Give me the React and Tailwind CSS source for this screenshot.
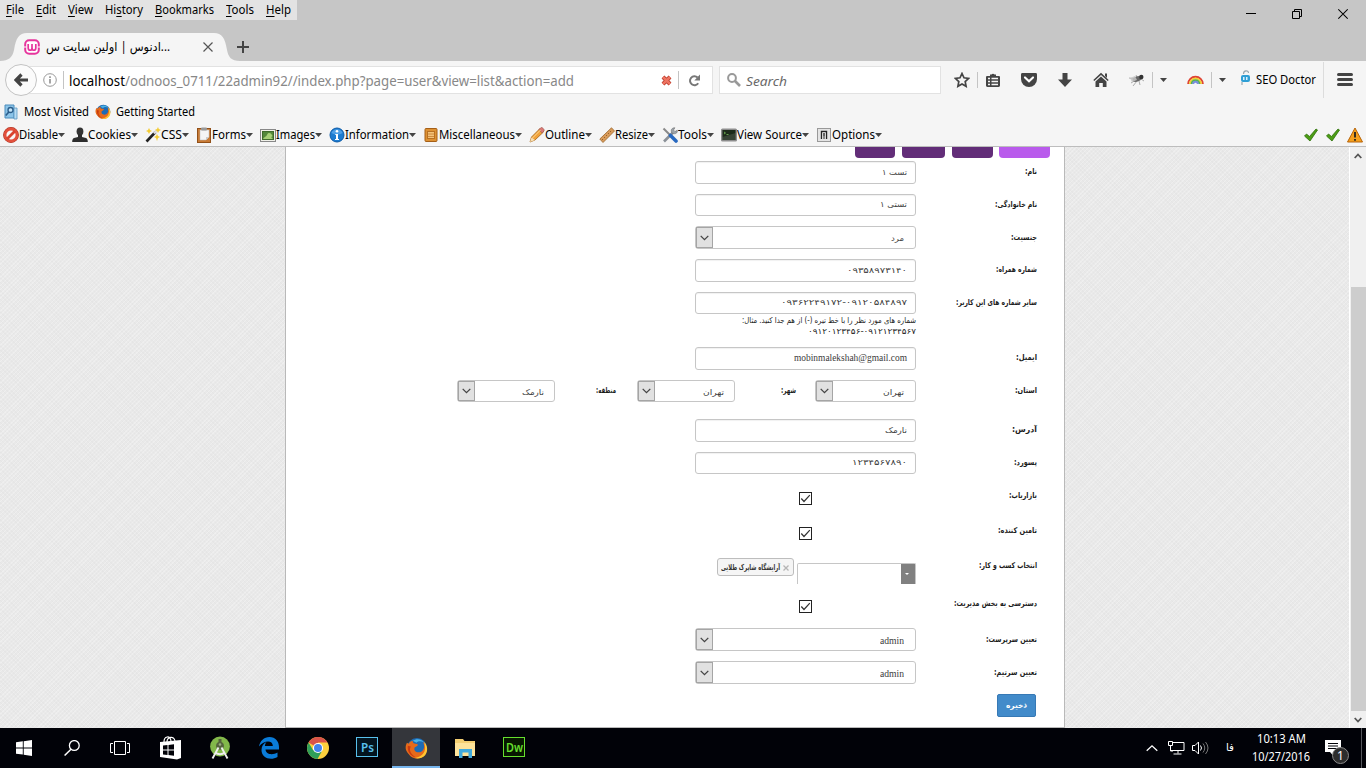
import React, { useLayoutEffect, useRef, useState } from "react";

const UI = "font-['Noto_Sans','DejaVu_Sans',sans-serif]";
const FA = "font-['DejaVu_Sans',sans-serif]";

/* One line of text condensed or widened to a set width. */
function Fit({ w, dir = "ltr", className = "", children }) {
  const ref = useRef(null);
  const [k, setK] = useState(1);
  useLayoutEffect(() => {
    if (ref.current.offsetWidth) setK(w / ref.current.getBoundingClientRect().width);
  }, [w]);
  return (
    <span dir="ltr" className={"flex shrink-0 " + className} style={{ width: w }}>
      <span ref={ref} dir={dir} className="block shrink-0 origin-left whitespace-nowrap" style={{ transform: `scaleX(${k})` }}>
        {children}
      </span>
    </span>
  );
}

const Svg = ({ w = 16, h = 16, box, className = "", children }) => (
  <svg width={w} height={h} viewBox={box || `0 0 ${w} ${h}`} fill="none" className={"block shrink-0 " + className}>{children}</svg>
);

const Firefox = ({ s = 16 }) => (
  <Svg w={s} h={s} box="0 0 24 24">
    <circle cx="12.5" cy="11.5" r="10.5" fill="#1d6bb5" />
    <path d="M8 4C12 1 18 2 20 6c-3-2-6-2-8 0z" fill="#49b4e8" />
    <path d="M2 6l2 1c1-2 3-3 4-3 0 2 1 3 3 3 2 0 3 1 2 2l-3 2c-1 3 1 5 4 5 4 0 6-3 6-7l-1-4c4 4 5 9 2 13-4 6-13 6-17 0C0 14 0 10 2 6z" fill="#e66a1a" />
    <path d="M20 5c4 5 4 10 1 14-3 3-7 4-11 3 7-1 11-5 11-11z" fill="#ffc531" />
    <path d="M3 9c-1 6 3 11 8 12-5-3-7-7-5-11z" fill="#c83a10" />
  </Svg>
);

const Caret = ({ w = 7 }) => <Svg w={w} h={4} box="0 0 7 4"><path d="M0 0h7L3.5 4z" fill="#444" /></Svg>;
const Chevron = () => <Svg w={9} h={6}><path d="M.7.9 4.5 4.7 8.3.9" stroke="#444" strokeWidth="1.3" /></Svg>;

const devIcons = {
  Disable: <Svg><circle cx="8" cy="8" r="6" stroke="#a8301f" strokeWidth="3.8" /><circle cx="8" cy="8" r="6" stroke="#e2503c" strokeWidth="2.8" fill="#f8f8f8" /><path d="M4 12 12 4" stroke="#d9442f" strokeWidth="2.8" /></Svg>,
  Cookies: <Svg><ellipse cx="8" cy="4.600" rx="3.400" ry="4" fill="#333" /><path d="M6 7h4v3l4 1c1.300.5 1.800 2 1.800 4H.2c0-2 .5-3.500 1.800-4l4-1z" fill="#2d2d2d" /></Svg>,
  CSS: <Svg><path d="M1.500 14.500 10.500 5" stroke="#222" strokeWidth="2.600" /><path d="M9 6.500 12 3" stroke="#ddd" strokeWidth="2.600" /><path d="m4 1 1 2 2 1-2 1-1 2-1-2-2-1 2-1zM12 7l1 2 2 1-2 1-1 3-1-3-2-1 2-1zM13 0l.8 2L16 3l-2 1-1 2-1-2-2-1 2-1z" fill="#f3cc35" /></Svg>,
  Forms: <Svg><rect x="1.500" y="1.500" width="13" height="14" fill="#c87b36" stroke="#925018" /><path d="M4 3h9v7l-3 3H4z" fill="#f5f5f5" stroke="#bbb" strokeWidth=".5" /><path d="M10 13v-3h3" fill="#ccc" /><rect x="5" y=".5" width="6" height="3" rx="1" fill="#999" /></Svg>,
  Images: <Svg><rect x=".5" y="2.500" width="15" height="12" fill="#f1f1ea" stroke="#888" /><rect x="2.500" y="4.500" width="11" height="8" fill="#53883a" stroke="#3f6b2c" /><path d="M3 12c2-3 3-2 4-4 1-3 4-2 5 0 1 1 0 2-1 2l2 2z" fill="#a6cf76" /></Svg>,
  Information: <Svg><circle cx="8" cy="8" r="7" fill="#1c7bd0" stroke="#0c5ba8" /><path d="M2.500 6C4 1 12 1 13.500 6 10 8 6 8 2.500 6z" fill="#4d9fe6" /><circle cx="8" cy="4.300" r="1.300" fill="#fff" /><path d="M6.300 7h2.700v5h1v1H6v-1h1V8h-.7z" fill="#fff" /></Svg>,
  Miscellaneous: <Svg><rect x="2" y="1.500" width="12" height="13" rx="1" fill="#dd9133" stroke="#a55f17" /><rect x="4.500" y="4.500" width="7" height="7" fill="#f3c37a" stroke="#b87022" /><path d="M5 7h6M5 9.500h6" stroke="#cf8a3d" /></Svg>,
  Outline: <Svg><path d="m1 15 1.500-5L11 1.500 14.500 5 6 13z" fill="#f1a23a" stroke="#a4641a" strokeWidth=".8" /><path d="m10 2.500 2-2c1-.5 4 2 3 3.500l-2 2z" fill="#da7a75" stroke="#9b5651" strokeWidth=".6" /><path d="m1 15 1.500-4.500L6 13z" fill="#f6dfb6" /><path d="m3.500 11 8-8" stroke="#ffd891" /></Svg>,
  Resize: <Svg><path d="M.8 12 12.500.8l3 3.200L4 15.500z" fill="#d89b5b" stroke="#9a6429" strokeWidth=".8" /><path d="m3 12 1 1m1-3 1 1m1-3 1 1m1-3 1 1m1-3 1 1" stroke="#8a5520" strokeWidth=".8" /></Svg>,
  Tools: <Svg><path d="m2 14.500 9-9" stroke="#8b9198" strokeWidth="2.600" /><path d="M10 6C8 3 10 .5 13 .8L11.500 3l1.500 1.500 2.300-1.300C16 6 13 8 10 6z" fill="#9aa1a8" stroke="#666" strokeWidth=".5" /><path d="M1.500 1.500 8 8" stroke="#888" strokeWidth="2" /><path d="m8.500 8.500 5.500 5.500" stroke="#2768c0" strokeWidth="3.600" strokeLinecap="round" /></Svg>,
  "View Source": <Svg><rect x=".7" y="2.200" width="14.600" height="11.600" rx=".8" fill="#1c2b1a" stroke="#8d8d8d" strokeWidth="1.400" /><path d="m3 5 1.500 1L3 7M5.500 7.500h2" stroke="#78c15a" strokeWidth=".8" /><path d="M1.500 10 14.500 6v7h-13z" fill="#fff" opacity=".12" /></Svg>,
  Options: <Svg><rect x="1.500" y="1.500" width="13" height="13" fill="#e4e4e4" stroke="#999" /><path d="M5.500 12V4.500h5V12" stroke="#222" strokeWidth="1.400" fill="#fff" /><path d="M8 6v3" stroke="#222" strokeWidth="1.400" /><path d="M7 9h2v3H7z" fill="#888" /></Svg>,
};

const devItems = [["Disable", 39], ["Cookies", 43], ["CSS", 21], ["Forms", 34], ["Images", 39], ["Information", 64], ["Miscellaneous", 76], ["Outline", 40], ["Resize", 33], ["Tools", 29], ["View Source", 65], ["Options", 43]];

const menu = [["", "F", "ile", 18], ["", "E", "dit", 20], ["", "V", "iew", 25], ["Hi", "s", "tory", 38], ["", "B", "ookmarks", 59], ["", "T", "ools", 28], ["", "H", "elp", 25]];

const Sep = ({ className = "" }) => <span className={"h-4 w-px shrink-0 bg-[#c4c4c4] " + className} />;
const Tick = () => <Svg w={14} h={14}><path d="m.5 8 2-2 3 2.500L12 1l1.500 1L6 13z" fill="#4c9d14" stroke="#2c6e08" strokeWidth=".8" /></Svg>;

function Browser() {
  return (
    <header className={"flex h-[147px] shrink-0 flex-col border-b border-[#bdbdbd] bg-[#f5f5f5] text-black " + UI}>
      <div className="flex h-[61px] shrink-0 justify-between bg-[#c6c6c6]">
        <div className="flex flex-col">
          <nav className="flex h-5 w-[297px] items-center gap-3 bg-[#e3e3e3] pl-1.5 text-[12px] leading-5">
            {menu.map(([a, u, b, w]) => (
              <Fit key={u + b} w={w}>{a}<span className="underline underline-offset-2">{u}</span>{b}</Fit>
            ))}
          </nav>
          <div className="mt-[13px] flex h-7">
            <div className="relative flex h-7 w-[232px] items-center pl-6">
              <Svg w={240} h={28} className="absolute left-0 top-0"><path d="M0 28C9 28 12.500 24 14 17 16 5 19 0 27 0h187c8 0 11 5 13 17 1.500 7 4 11 13 11z" fill="#f5f5f5" /></Svg>
              <div className="relative flex items-center">
                <Svg><rect x="1.200" y="1.200" width="13.600" height="13.600" rx="4" fill="#fff" stroke="#e6349c" strokeWidth="2" /><path d="M4.200 5v4c0 3 3.800 3 3.800 0V5m0 4c0 3 3.800 3 3.800 0V5" stroke="#e6349c" strokeWidth="1.700" /><path d="M0 8h2.500M13.500 8H16" stroke="#fff" /></Svg>
                <Fit w={124} className="ml-1.5 text-[12px] leading-5">ادنوس | اولین سایت س...</Fit>
                <Svg w={10} h={10} className="ml-[33px]"><path d="m.5.5 9 9m0-9-9 9" stroke="#555" strokeWidth="1.200" /></Svg>
              </div>
            </div>
            <Svg w={12} h={12} className="relative ml-[5px] mt-2"><path d="M6 0v12M0 6h12" stroke="#444" strokeWidth="2" /></Svg>
          </div>
        </div>
        <div className="mt-2 flex gap-9 pr-[18px]">
          <Svg w={10} h={12}><path d="M0 5.500h10" stroke="#000" /></Svg>
          <Svg w={10} h={12}><path d="M.5 3.500h7v7h-7zM2.500 3.500v-2h7v7h-2" stroke="#000" /></Svg>
          <Svg w={10} h={12}><path d="m.3 1.300 9.400 9.400m0-9.400L.3 10.700" stroke="#000" strokeWidth="1.100" /></Svg>
        </div>
      </div>

      <div className="flex h-[38px] shrink-0 items-center pl-[5px]">
        <span className="z-10 flex h-8 w-8 shrink-0 items-center justify-center rounded-full border border-[#c3c3c3] bg-[#fbfbfb]">
          <Svg w={14} h={14}><path d="M7.500 1.500 2 7l5.500 5.500M2.500 7H14" stroke="#444" strokeWidth="3.200" /></Svg>
        </span>
        <div className="-ml-4 flex h-7 w-[692px] shrink-0 items-center border border-[#e2e2e2] bg-white">
          <Svg w={14} h={14} className="ml-[21px]"><circle cx="7" cy="7" r="6.300" stroke="#999" /><path d="M7 6v4.500M7 3.300V5" stroke="#888" strokeWidth="1.500" /></Svg>
          <Sep className="ml-1.5 h-[18px]" />
          <Fit w={505} className="ml-[5px] mt-0.5 text-[14px] leading-6 text-[#888]"><span className="text-black">localhost</span>/odnoos_0711/22admin92//index.php?page=user&amp;view=list&amp;action=add</Fit>
          <Svg w={11} h={11} className="ml-[87px]"><path d="m2 2 7 7m0-7L2 9" stroke="#b33222" strokeWidth="4" /><path d="m2 2 7 7m0-7L2 9" stroke="#ee7361" strokeWidth="2.600" /></Svg>
          <Sep className="ml-1.5 h-[18px]" />
          <Svg w={13} h={13} className="ml-[9px]"><path d="M10.200 9.300A4.500 4.500 0 1 1 9.600 3.500" stroke="#777" strokeWidth="2" /><path d="M12 .5v6H6.300z" fill="#777" /></Svg>
        </div>
        <div className="ml-1.5 flex h-7 w-[222px] shrink-0 items-center border border-[#e2e2e2] bg-white pl-[7px]">
          <Svg w={14} h={14}><circle cx="5" cy="5" r="3.900" stroke="#999" strokeWidth="2" /><path d="m8 8 5 5" stroke="#999" strokeWidth="2.600" /></Svg>
          <Fit w={41} className="ml-[5px] mt-0.5 text-[13px] italic leading-6 text-[#6a6a6a]">Search</Fit>
        </div>
        <Svg className="ml-[13px]"><path d="m8 1.500 2 4.300 4.700.6-3.500 3.200.9 4.700L8 12l-4.100 2.300.9-4.700L1.300 6.400 6 5.800z" stroke="#444" strokeWidth="1.700" /></Svg>
        <Sep className="ml-[7px]" />
        <Svg className="ml-[7px]"><path d="M5 2.500h1.500a1.800 1.800 0 0 1 3 0H11V4h2.500c1 0 1.500.5 1.500 1.300v8c0 1-.5 1.700-1.500 1.700h-11C1.500 15 1 14.300 1 13.300v-8C1 4.500 1.500 4 2.500 4H5z" fill="#444" /><path d="M3 6.500h2M6.500 6.500H13M3 9.500h2M6.500 9.500H13M3 12.500h2M6.500 12.500H13" stroke="#f5f5f5" strokeWidth="1.500" /></Svg>
        <Svg className="ml-5"><path d="M1.500 1h13c1 0 1.500.5 1.500 1.500V7a8 8 0 0 1-16 0V2.500C0 1.500.500 1 1.500 1z" fill="#444" /><path d="M4 5.500 8 9.200l4-3.700" stroke="#fff" strokeWidth="2.200" strokeLinecap="round" /></Svg>
        <Svg className="ml-5"><path d="M5.500 1h5v6.500H15L8 15 1 7.500h4.500z" fill="#444" /></Svg>
        <Svg className="ml-5"><path d="M8 .8 15.700 8l-1 1L8 3 1.300 9l-1-1z" fill="#444" /><path d="M8 4.500 13.500 9.500V15H9.800v-4H6.200v4H2.500V9.500zM12 1.500h2V6l-2-2z" fill="#444" /></Svg>
        <Svg className="ml-5"><path d="M0 6 7 7M2 11l5-3M4 14l4-5m2 0 1 4M12 7l3 2M8 5 7 3" stroke="#999" strokeWidth=".8" /><ellipse cx="8" cy="7" rx="4.500" ry="2.600" fill="#666" transform="rotate(-15 8 7)" /><circle cx="12.300" cy="5" r="2.200" fill="#333" /><path d="m1 6 5-2 2 4-5 2z" fill="#c4c4c4" opacity=".85" /></Svg>
        <Sep className="ml-[7px]" />
        <span className="ml-[7px]"><Caret /></span>
        <Svg w={17} h={12} className="ml-5"><path d="M1.200 10a7.300 7.300 0 0 1 14.600 0" stroke="#df4335" strokeWidth="2" /><path d="M3 10a5.500 5.500 0 0 1 11 0" stroke="#f2cf35" strokeWidth="2" /><path d="M4.700 10a3.800 3.800 0 0 1 7.600 0" stroke="#55b253" strokeWidth="2" /><path d="M6.200 10a2.300 2.300 0 0 1 4.600 0" stroke="#7a8dde" strokeWidth="2" /></Svg>
        <Sep className="ml-[7px]" />
        <span className="ml-[7px]"><Caret /></span>
        <Svg w={11} h={16} className="-mt-1 ml-3.5"><rect x="1" y="5" width="9" height="7" rx="2" fill="#2f9fd5" /><path d="M3 7h1.500v3H3zm3 0h1.500v3H6z" fill="#d9f1fd" /><path d="M3.500 4C3.500 0 8.500 0 8.500 3M2 12v3" stroke="#9aa7ae" strokeWidth="1.200" /></Svg>
        <Fit w={60} className="ml-[5px] text-[12px] leading-5">SEO Doctor</Fit>
        <Sep className="ml-[7px] h-9 bg-[#dcdcdc]" />
        <Svg className="ml-[13px]"><path d="M1.500 2.500h13M1.500 7.500h13M1.500 12.500h13" stroke="#444" strokeWidth="3" strokeLinecap="round" /></Svg>
      </div>

      <div className="mt-px flex h-6 shrink-0 items-center pl-[3px] text-[12px] leading-5">
        <Svg><path d="M2 1h9v13H2z" fill="#8cc4e8" stroke="#4a8cbc" /><path d="M11 4h3v11h-3z" fill="#b8dcf3" stroke="#5c98c2" strokeWidth=".8" /><circle cx="7.500" cy="6" r="2.500" fill="#c3e4f8" stroke="#2b5d8a" strokeWidth="1.300" /><path d="m5.800 8-3 3.500" stroke="#2b5d8a" strokeWidth="1.600" /></Svg>
        <Fit w={65} className="ml-[5px]">Most Visited</Fit>
        <span className="ml-1.5"><Firefox /></span>
        <Fit w={79} className="ml-[5px]">Getting Started</Fit>
      </div>

      <div className="flex h-[22px] shrink-0 items-center justify-between pl-[3px] pr-[3px] text-[12px] leading-5">
        <div className="flex gap-[7px]">
          {devItems.map(([t, w]) => (
            <span key={t} className="flex items-center">{devIcons[t]}<Fit w={w}>{t}</Fit><Caret /></span>
          ))}
        </div>
        <div className="flex items-center">
          <Tick /><span className="w-2" /><Tick />
          <Svg className="ml-[7px]"><path d="M8 1 15.500 15H.5z" fill="#f6a01c" stroke="#b66308" strokeLinejoin="round" /><path d="M8 5v5.500M8 12v1.700" stroke="#222" strokeWidth="1.800" /></Svg>
        </div>
      </div>
    </header>
  );
}

const inputBox = "flex shrink-0 items-center justify-end rounded-[3px] border border-[#c6c6c6] bg-white text-[#3c3c3c]";

function Input({ w, h = "h-[23px]", children, latin }) {
  return (
    <div className={inputBox + " w-[221px] pr-2 shadow-[inset_0_1px_1px_rgba(0,0,0,0.06)] " + h}>
      {latin
        ? <Fit w={w} className="-mt-px font-['Liberation_Serif',serif] text-[10px] leading-4">{children}</Fit>
        : <Fit w={w} dir="rtl" className={"text-[8px] leading-4 " + FA}>{children}</Fit>}
    </div>
  );
}

function Select({ box = "w-[221px]", h = "h-[23px]", pr = "pr-[11px]", w, children, latin }) {
  return (
    <div className={inputBox + " " + box + " " + pr + " " + h}>
      <span className="mr-auto flex h-full w-[17px] items-center justify-center border border-[#a5a5a5] bg-[#e1e1e1]"><Chevron /></span>
      <Fit w={w} dir={latin ? "ltr" : "rtl"} className={latin ? "mt-0.5 font-['Liberation_Serif',serif] text-[10px] leading-4" : "mt-[3px] text-[8px] leading-4 " + FA}>{children}</Fit>
    </div>
  );
}

const Check = () => (
  <span className="mr-[104px] flex h-[13px] w-[13px] items-center justify-center border border-[#222] bg-white">
    <Svg w={11} h={11}><path d="m1.300 5.500 2.700 3L9.800 2.200" stroke="#333" strokeWidth="1.200" /></Svg>
  </span>
);

const Label = ({ w, className = "", children }) => (
  <Fit w={w} dir="rtl" className={"h-5 text-[8px] font-bold leading-[22px] text-[#1c1c1c] " + FA + " " + className}>{children}</Fit>
);

function Row({ h, label, w, up = "", children }) {
  return (
    <div className={"flex shrink-0 items-start justify-end pr-[27px] " + h}>
      {children}
      <div className="flex w-[121px] shrink-0 justify-end"><Label w={w} className={up}>{label}</Label></div>
    </div>
  );
}

function Form() {
  return (
    <section className="ml-[285px] flex w-[780px] flex-col border-x border-b border-[#b9b9b9] bg-white">
      <div className="flex h-[14px] shrink-0 items-start justify-end pr-[14px]">
        <span className="h-[11px] w-10 rounded-b bg-[#622d78]" />
        <span className="ml-[7px] h-[11px] w-[43px] rounded-b bg-[#622d78]" />
        <span className="ml-[7px] h-[11px] w-[41px] rounded-b bg-[#622d78]" />
        <span className="ml-1.5 h-[11px] w-[51px] rounded-b bg-[#b95bec]" />
      </div>
      <Row h="h-[33px]" label="نام:" w={12}><Input w={25}>تست ۱</Input></Row>
      <Row h="h-8" label="نام خانوادگی:" w={42}><Input w={27} h="h-[22px]">تستی ۱</Input></Row>
      <Row h="h-[33px]" label="جنسیت:" w={26} up="mt-px"><Select w={13}>مرد</Select></Row>
      <Row h="h-[33px]" label="شماره همراه:" w={41}><Input w={60}>۰۹۳۵۸۹۷۳۱۴۰</Input></Row>
      <Row h="h-[55px]" label="سایر شماره های این کاربر:" w={81}>
        <div className="flex flex-col items-end text-[#222]">
          <Input w={126} h="h-[22px]">۰۹۳۶۲۲۴۹۱۷۲-۰۹۱۲۰۵۸۴۸۹۷</Input>
          <Fit w={174} dir="rtl" className={"mt-px text-[8px] leading-[11px] " + FA}>شماره های مورد نظر را با خط تیره (-) از هم جدا کنید. مثال:</Fit>
          <Fit w={108} dir="rtl" className={"text-[8px] leading-[11px] " + FA}>۰۹۱۲۰۱۲۳۴۵۶-۰۹۱۲۱۲۳۴۵۶۷</Fit>
        </div>
      </Row>
      <Row h="h-[33px]" label="ایمیل:" w={21}><Input w={113} latin>mobinmalekshah@gmail.com</Input></Row>
      <Row h="h-[39px]" label="استان:" w={22}>
        <Select box="w-[98px]" h="h-[22px]" pr="pr-2.5" w={22}>نارمک</Select>
        <Label w={20} className="ml-[41px]">منطقه:</Label>
        <span className="w-[21px]" />
        <Select box="w-[98px]" h="h-[22px]" pr="pr-2.5" w={21}>تهران</Select>
        <Label w={15} className="ml-[46px]">شهر:</Label>
        <span className="w-[19px]" />
        <Select box="w-[101px]" h="h-[22px]" w={21}>تهران</Select>
      </Row>
      <Row h="h-[33px]" label="آدرس:" w={25}><Input w={22}>نارمک</Input></Row>
      <Row h="h-10" label="پسورد:" w={23}><Input w={55} h="h-[22px]">۱۲۳۴۵۶۷۸۹۰</Input></Row>
      <Row h="h-[35px]" label="بازاریاب:" w={28} up="-mt-[7px]"><Check /></Row>
      <Row h="h-[31px]" label="تامین کننده:" w={39} up="-mt-[7px]"><Check /></Row>
      <Row h="h-[42px]" label="انتخاب کسب و کار:" w={58} up="-mt-[3px]">
        <span className="flex h-[18px] w-[77px] items-center rounded-[3px] border border-[#bdbdbd] bg-[#f5f5f5] pl-[3px]">
          <Fit w={59} dir="rtl" className={"mt-0.5 text-[8px] font-bold leading-4 text-[#333] " + FA}>آرایشگاه شاپرک طلایی</Fit>
          <Svg w={6} h={6} className="ml-[3px] mt-0.5"><path d="m.5.5 5 5m0-5-5 5" stroke="#b5b5b5" strokeWidth="1.300" /></Svg>
        </span>
        <span className="ml-[3px] mt-[5px] flex h-[21px] w-[119px] justify-end rounded-t-[2px] border-x border-t border-[#c6c6c6]">
          <span className="flex w-[14px] items-center justify-center bg-[#808080] pr-0.5"><Svg w={4} h={2}><path d="M0 0h4L2 2z" fill="#fff" /></Svg></span>
        </span>
      </Row>
      <Row h="h-7" label="دسترسی به بخش مدیریت:" w={83} up="-mt-[7px]"><Check /></Row>
      <Row h="h-[33px]" label="تعیین سرپرست:" w={51} up="mt-px"><Select w={24} latin>admin</Select></Row>
      <Row h="h-[33px]" label="تعیین سرتیم:" w={43} up="mt-px"><Select w={24} latin>admin</Select></Row>
      <div className="flex justify-end pr-7">
        <button className="flex h-[23px] w-[39px] items-center justify-center rounded-[2px] border border-[#3779b5] bg-[#428bca] text-white">
          <Fit w={21} dir="rtl" className={"text-[8px] font-bold leading-4 " + FA}>ذخیره</Fit>
        </button>
      </div>
    </section>
  );
}

const Adobe = ({ text, cls, w }) => (
  <span className={"mb-0.5 flex h-5 w-[22px] items-center justify-center border " + cls}><Fit w={w} className="text-[13px] font-semibold leading-4">{text}</Fit></span>
);

function Taskbar() {
  const cell = "flex h-10 w-12 shrink-0 items-center justify-center";
  return (
    <footer className={"flex h-10 shrink-0 bg-[#010208] text-white " + UI}>
      <span className={cell}><Svg><path d="M0 2.300 6.800 1.300v6.200H0zM7.700 1.200 16 0v7.500H7.700zM0 8.400h6.800v6.200L0 13.700zM7.700 8.400H16V16l-8.300-1.200z" fill="#fff" /></Svg></span>
      <span className={cell}><Svg><circle cx="10.300" cy="5.500" r="4.900" stroke="#fff" strokeWidth="1.300" /><path d="M7 9.200.6 15.500" stroke="#fff" strokeWidth="1.500" /></Svg></span>
      <span className={cell}><Svg w={20} h={14}><path d="M4.500.5h11v13h-11zM3 2.500H.5v9H3M17 2.500h2.500v9H17" stroke="#fff" /></Svg></span>
      <div className="ml-[3px] flex gap-px">
        <span className={cell}><Svg w={22} h={24}><path d="M0 6 21 4v18L17 23.500 0 21z" fill="#fff" /><path d="M4 6C4 0 10-1 11 5M7 6c0-5 7-7 8-1" stroke="#fff" strokeWidth="1.200" /><path d="m3 9.500 4.500-.5v4.500H3zm5.500-.6 5.500-.6v5.200H8.500zM3 14.500h4.500V19L3 18.500zm5.500 0H14v5.200l-5.500-.6z" fill="#010208" /></Svg></span>
        <span className={cell}><Svg w={20} h={24} box="1 0 20 24"><circle cx="11" cy="10.500" r="9.900" fill="#82b84a" /><path d="M9.500 3h3v3a4 4 0 1 1-3 0z" fill="#55643d" /><circle cx="11" cy="8.500" r="1.300" fill="#9aae84" /><path d="M9.500 11.500 3.500 22.500M12.500 11.500l6 11M6 16.500c3 2 7 2 10 0" stroke="#eee" strokeWidth="1.900" /></Svg></span>
        <span className={cell}><Svg w={20} h={22}><path d="M0 9.500C1 4 5 0 10.500 0 16.500 0 20 4.500 20 10v2.500H6.500c.3 5 7 6 12 3v4.500c-7 4-16 1-16-7 0-4 2-6.500 5-8-1 1.200-1.500 2.500-1.600 4h7.900c.2-6-8.800-6-13.800.5z" fill="#0a7bd8" /></Svg></span>
        <span className={cell}><Svg w={22} h={22}><circle cx="11" cy="11" r="11" fill="#fcd03d" /><path d="M11 11 1.500 5.500A11 11 0 0 1 20.500 5.500H11z" fill="#d9534a" /><path d="M1.500 5.500A11 11 0 0 0 10.500 22L15 14l-9-1z" fill="#2f9e58" /><circle cx="11" cy="11" r="5.100" fill="#fff" /><circle cx="11" cy="11" r="4" fill="#4383ed" /></Svg></span>
        <span className={cell}><Adobe text="Ps" w={13} cls="border-[#58c0ec] bg-[#03141f] text-[#58c0ec]" /></span>
        <span className={cell + " border-b-2 border-[#76b5ed] bg-[#34363b] pt-0.5"}><Firefox s={23} /></span>
        <span className={cell}><Svg w={22} h={20}><path d="M1 1h8l1.500 2H21v15H1z" fill="#f4cf72" /><path d="M1 5h20v13H1z" fill="#fee39a" /><path d="M5 20v-9h13v9h-3.500v-5.500h-6V20z" fill="#41aadd" /></Svg></span>
        <span className={cell}><Adobe text="Dw" w={17} cls="border-[#65df2d] bg-[#071700] text-[#65df2d]" /></span>
      </div>
      <div className="ml-auto flex items-center">
        <Svg w={12} h={8}><path d="m.7 6.800 5.300-5 5.300 5" stroke="#fff" strokeWidth="1.300" /></Svg>
        <Svg w={17} h={14} className="ml-2.5"><path d="M4 1.500h12v8H3M.5.500h4v4h-4zM2.500 5v5H5M10 9.500v3M5.500 13h8" stroke="#fff" /></Svg>
        <Svg w={17} h={14} className="ml-[7px]"><path d="M.500 4.500H3L6.500 1v12L3 9.500H.500z" stroke="#fff" /><path d="M8.500 4.500q2 2.500 0 5" stroke="#fff" /><path d="M11 2.500q3.500 4.500 0 9M13.500 1q5 6 0 12" stroke="#777" /></Svg>
        <Fit w={8} dir="rtl" className={"ml-[17px] text-[11px] leading-5 " + FA}>فا</Fit>
        <div className="ml-[18px] flex w-[58px] flex-col items-center text-[12px] leading-[18px]">
          <Fit w={49}>10:13 AM</Fit>
          <Fit w={58}>10/27/2016</Fit>
        </div>
        <div className="relative ml-[15px] h-10 w-[24px]">
          <Svg w={16} h={17} className="mt-3"><path d="M0 0h16v12H8.500v4L5 12H0z" fill="#fff" /><path d="M3 3.500h10M3 6h10M3 8.500h10" stroke="#010208" /></Svg>
          <span className="absolute left-[7px] top-[19px] flex h-[17px] w-[17px] items-center justify-center rounded-full border border-[#8b8b8b] bg-[#2d2d2d] text-[12px] leading-none">1</span>
        </div>
        <span className="ml-3 mr-1 h-10 w-px bg-[#55575c]" />
      </div>
    </footer>
  );
}

export default function App() {
  return (
    <div className="flex h-[768px] w-[1366px] flex-col overflow-hidden">
      <Browser />
      <main className="flex h-[581px] shrink-0 justify-between bg-[#e9e9e9] bg-[repeating-linear-gradient(45deg,rgba(0,0,0,0.015)_0px,rgba(0,0,0,0.015)_1px,transparent_1px,transparent_3px),repeating-linear-gradient(-45deg,rgba(255,255,255,0.25)_0px,rgba(255,255,255,0.25)_1px,transparent_1px,transparent_3px)]">
        <Form />
        <aside className="flex w-[17px] flex-col items-center border-l border-white bg-[#f0f0f0]">
          <span className="flex h-[17px] items-center"><Svg w={8} h={6}><path d="m.7 5 3.300-3.500L7.300 5" stroke="#555" strokeWidth="1.800" /></Svg></span>
          <span className="mt-[123px] h-[424px] w-[15px] bg-[#cdcdcd]" />
          <span className="flex h-[17px] items-center"><Svg w={8} h={6} className="mt-px"><path d="m.7 1 3.300 3.500L7.300 1" stroke="#555" strokeWidth="1.800" /></Svg></span>
        </aside>
      </main>
      <Taskbar />
    </div>
  );
}
